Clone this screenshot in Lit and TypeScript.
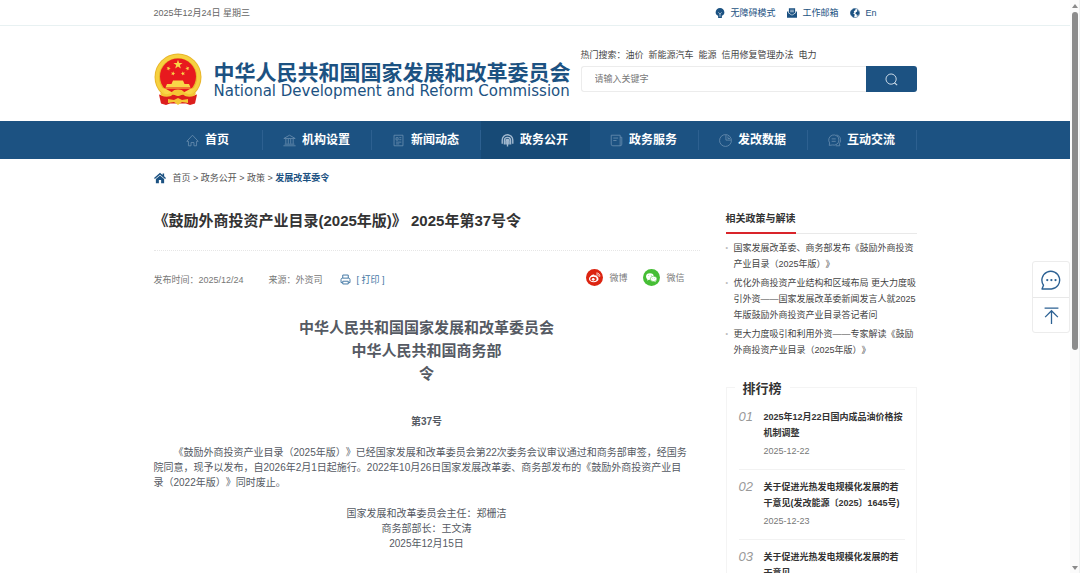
import { LitElement, html, svg, css } from "lit";
import { customElement, property } from "lit/decorators.js";
import { classMap } from "lit/directives/class-map.js";

const SANS = css`"Liberation Sans", "Noto Sans CJK SC", sans-serif`;

const icons: Record<string, unknown> = {
  bulb: svg`<path fill="currentColor" d="M8 0a7 7 0 0 0-7 7c0 2.500 1.500 4.200 4 5.500V16h6v-3.500c2.500-1.300 4-3 4-5.500a7 7 0 0 0-7-7z"/><path d="M5.500 7L8 9.500 10.500 7M8 9.500v4.500" stroke="#fff" stroke-width="1" fill="none"/>`,
  mail: svg`<path fill="currentColor" d="M0 6l2-1v3l6 4 6-4V5l2 1v9.500H0z"/><path fill="currentColor" d="M3 0.500h10v7L8 11 3 7.500z"/><path d="M5 3.500h6M5 6h6" stroke="#fff" stroke-width="1"/>`,
  globe: svg`<circle cx="8" cy="8" r="7.300" fill="#fff" stroke="currentColor" stroke-width=".9"/><path fill="currentColor" d="M1.500 4.500L5.500 1l3.500 0-.5 2.500L6 5l1 2-2 1.500 2.500 2-.5 3L5.500 15 1.500 11 .500 8zM11 2.500l3 2.500 1 3.500-1.500 3-2.500 1-.5-2.500-2-1 1-2.500 2-.5z"/>`,
  search: svg`<circle cx="7.500" cy="7.500" r="6.300" fill="none" stroke="currentColor" stroke-width="1.200"/><path d="M11.500 12l3.500 3" stroke="currentColor" stroke-width="1.300" fill="none"/>`,
  home: svg`<path d="M1 9L8 1.500 15 9h-2v5.500H9.800v-4H6.200v4H3V9z" fill="none" stroke="currentColor" stroke-linejoin="round"/>`,
  bank: svg`<path d="M1 5.500L8 1.500l7 4zM.500 14.500h15M2 12.500h12M3.500 6v6M6.500 6v6M9.500 6v6M12.500 6v6" fill="none" stroke="currentColor" stroke-linejoin="round"/>`,
  news: svg`<path d="M2.500 1.500h11v13h-11zM5 4.500h2.500v3H5zM9 4.500h2.500M9 7h2.500M5 10h6.500M5 12.200h4" fill="none" stroke="currentColor"/>`,
  open: svg`<path d="M1.500 12V7.500a6.500 6.500 0 0 1 13 0V12M4.200 13V8a3.800 3.800 0 0 1 7.600 0v5M8 6v9.500M6.200 13V8.500a1.800 1.800 0 0 1 3.600 0V13" fill="none" stroke="currentColor" stroke-width="1.700"/>`,
  service: svg`<path d="M1.500 1.500h11v13h-9a2 2 0 0 1-2-2zM12.500 4h2v8.500a2 2 0 0 1-2 2M4 5h6M4 8h4" fill="none" stroke="currentColor"/>`,
  data: svg`<circle cx="8" cy="8" r="7.300" fill="none" stroke="currentColor"/><path d="M8.500 1v6.500H15M11 3v2.500h2.500" fill="none" stroke="currentColor"/>`,
  chat: svg`<path d="M1.500 14l.500-3A6.300 6.300 0 1 1 5.500 13.500zM4.500 6h5M4.500 9h5M10.500 1.200A6.300 6.300 0 0 1 14 11.500l.500 3h-5" fill="none" stroke="currentColor"/>`,
  house: svg`<path fill="currentColor" d="M8 1L0 8l1.200 1.300L8 3.500l6.800 5.800L16 8l-2.500-2.200V2h-2v2z"/><path fill="currentColor" d="M8 4.500L2.500 9.200V15h4v-4.500h3V15h4V9.200z"/>`,
  print: svg`<path d="M4 6V1.500h8V6M3.500 12.500H1.500V8c0-1.200.800-2 2-2h9c1.200 0 2 .800 2 2v4.500h-2M4 10.500h8v4H4z" fill="none" stroke="currentColor" stroke-width="1.400" stroke-linejoin="round"/>`,
  weibo: svg`<circle cx="8" cy="8" r="8" fill="#dc2411"/><ellipse cx="7.300" cy="9.300" rx="4.500" ry="3.200" fill="#fff"/><path fill="#fff" d="M3.500 8c1-2 3-3.300 4-2.800.600.300.300 1 .300 1 2-.500 2.800 0 2.500 1z"/><ellipse cx="7" cy="9.500" rx="3" ry="2.100" fill="#dc2411"/><circle cx="6.800" cy="9.700" r="1.300" fill="#fff"/><path d="M10 3.800a2.600 2.600 0 0 1 3 3.200M10.200 5.300a1.100 1.100 0 0 1 1.300 1.400" fill="none" stroke="#fff" stroke-width=".8" stroke-linecap="round"/>`,
  wechat: svg`<circle cx="8" cy="8" r="8" fill="#46be35"/><ellipse cx="6.500" cy="7" rx="3.600" ry="3" fill="#fff"/><path fill="#fff" d="M4.200 8.800L4 11l2-1.400zM11.500 10.800l.600 1.700-2-1z"/><ellipse cx="10" cy="9.300" rx="3.100" ry="2.500" fill="#fff" stroke="#46be35" stroke-width=".5"/><circle cx="5.400" cy="6.200" r=".4" fill="#46be35"/><circle cx="7.700" cy="6.200" r=".4" fill="#46be35"/><circle cx="9.100" cy="8.700" r=".3" fill="#46be35"/><circle cx="11" cy="8.700" r=".3" fill="#46be35"/>`,
  bubble: svg`<path d="M.800 15.200L2 12.200A7.100 7.100 0 1 1 8.300 15.200z" fill="none" stroke="currentColor" stroke-width="1.100" stroke-linejoin="round"/><circle cx="5" cy="8" r=".9" fill="currentColor"/><circle cx="8.300" cy="8" r=".9" fill="currentColor"/><circle cx="11.600" cy="8" r=".9" fill="currentColor"/>`,
  top: svg`<path d="M1.500 1h13M8 16V3.800M2 9.500L8 3.500l6 6" fill="none" stroke="currentColor" stroke-width="1.200"/>`,
};

@customElement("ui-icon")
class UiIcon extends LitElement {
  @property() name = "home";
  static styles = css`
    :host { display: inline-flex; flex: none; width: 13px; height: 13px; }
    svg { display: block; width: 100%; height: 100%; }
  `;
  render() {
    return html`<svg viewBox="0 0 16 16" aria-hidden="true">${icons[this.name]}</svg>`;
  }
}

@customElement("national-emblem")
class NationalEmblem extends LitElement {
  static styles = css`
    :host { display: block; flex: none; width: 48px; height: 52px; }
    svg { display: block; width: 100%; height: 100%; }
  `;
  render() {
    const star = "M0-1L.235-.324.951-.309.380.124.588.809 0 .400-.588.809-.380.124-.951-.309-.235-.324z";
    const at = (x: number, y: number, s: number, r = 0) =>
      svg`<path d=${star} transform="translate(${x} ${y}) rotate(${r}) scale(${s})" fill="#f9d648"/>`;
    return html`<svg viewBox="0 0 48 52" role="img" aria-label="国徽">
      <circle cx="24" cy="24" r="23.500" fill="#e9b52b"/>
      <circle cx="24" cy="24" r="20.800" fill="none" stroke="#f6d13f" stroke-width="3.400"/>
      <circle cx="24" cy="23.500" r="18" fill="#e8191e"/>
      ${at(24, 11.500, 4.800)}${at(14.500, 15.500, 2.300, 20)}${at(33.500, 15.500, 2.300, -20)}${at(19, 20.500, 2.300, 10)}${at(29, 20.500, 2.300, -10)}
      <path fill="#f9d648" d="M19 27.500h10l1.500 3.500H35l1.500 3.500h-25L13 31h4.500zM7.500 35.500h33l-4 6h-25z"/>
      <path fill="#e8191e" d="M12 36h24l-6 3.200a6.500 3 0 0 0-12 0z"/>
      <path fill="#dc1f1d" d="M5 41.500c6 1.500 10 1.500 13-.5l6 2 6-2c3 2 7 2 13 .5L41 50.500 36 52l-4-1.500H16L12 52l-5-1.500z"/>
      <path fill="#f4c635" d="M6 39.500c5 2.500 9 2 12-.5a6.500 4 0 0 1 12 0c3 2.500 7 3 12 .5l-1 3c-5 2-9 1.500-12-1l-5 1.500-5-1.500c-3 2.500-7 3-12 1zM14 46l6 1 4-2 4 2 6-1v4l-6-1-4 3-4-3-6 1z"/>
    </svg>`;
  }
}

const NAV = [
  ["home", "首页"],
  ["bank", "机构设置"],
  ["news", "新闻动态"],
  ["open", "政务公开"],
  ["service", "政务服务"],
  ["data", "发改数据"],
  ["chat", "互动交流"],
];
const HOT = ["油价", "新能源汽车", "能源", "信用修复管理办法", "电力"];
const RELATED = [
  "国家发展改革委、商务部发布《鼓励外商投资产业目录（2025年版）》",
  "优化外商投资产业结构和区域布局 更大力度吸引外资——国家发展改革委新闻发言人就2025年版鼓励外商投资产业目录答记者问",
  "更大力度吸引和利用外资——专家解读《鼓励外商投资产业目录（2025年版）》",
];
const RANKING = [
  ["01", "2025年12月22日国内成品油价格按机制调整", "2025-12-22"],
  ["02", "关于促进光热发电规模化发展的若干意见(发改能源〔2025〕1645号)", "2025-12-23"],
  ["03", "关于促进光热发电规模化发展的若干意见", "2025-12-23"],
];

@customElement("app-root")
class AppRoot extends LitElement {
  static styles = css`
    :host { display: block; font: 9px/16px ${SANS}; text-spacing-trim: space-all; color: #666; background: #fff; }
    * { box-sizing: border-box; margin: 0; padding: 0; }
    a { color: inherit; text-decoration: none; }
    ul, ol { list-style: none; }
    .window { display: flex; height: 100vh; overflow: hidden; position: relative; }
    .page { flex: 1; min-width: 0; overflow: hidden; }
    .wrap { width: min(763px, 100% - 32px); margin: 0 auto; }

    .topbar { border-bottom: 1px solid #e8f1f2; }
    .topbar .wrap { display: flex; justify-content: space-between; align-items: center; height: 25px; }
    .tools { display: flex; gap: 12px; padding-right: 40px; color: #1c5282; }
    .tools a { display: flex; align-items: center; gap: 5px; }
    .tools ui-icon { width: 10px; height: 10px; }

    .header { display: flex; justify-content: space-between; padding: 21px 0 16px; }
    .brand { display: flex; gap: 12px; padding-top: 6px; color: #1c5282; }
    .names { padding-top: 9px; white-space: nowrap; }
    .name-zh { font-size: 21px; line-height: 22px; font-weight: 700; }
    .name-en { font: 15px/14px "DejaVu Sans", sans-serif; }
    .find { width: 336px; }
    .hot { display: flex; line-height: 16px; color: #444; margin-bottom: 3px; }
    .hot-list { display: flex; gap: 5px; }
    .search { display: flex; height: 26px; }
    .search input { flex: 1; min-width: 0; border: 1px solid #ececec; border-right: 0; border-radius: 3px 0 0 3px; padding: 0 13px; font: 9px ${SANS}; outline: 0; }
    .search input::placeholder { color: #777; opacity: 1; }
    .search button { width: 51px; border: 0; border-radius: 0 3px 3px 0; background: #1c5282; color: #cfdde9; display: grid; place-items: center; }

    .nav { background: #1c5282; }
    .nav ul { display: flex; }
    .nav li { flex: 1; display: flex; align-items: center; height: 38px; }
    .nav li.active { background: #174a76; }
    .nav a { flex: 1; display: flex; align-items: center; justify-content: center; gap: 6px; height: 20px; border-right: 1px solid #2d6090; color: #fff; font-size: 12px; font-weight: 700; }
    .nav .active a { border-color: transparent; }
    .nav ui-icon { color: #6a8fb0; }
    .nav .active ui-icon { color: #a3bad0; }

    .crumbs { display: flex; align-items: center; gap: 7px; height: 38px; color: #555; }
    .crumbs ui-icon { width: 12px; height: 12px; color: #1c5282; }
    .crumbs b { color: #1c5282; }

    .columns { display: grid; grid-template-columns: minmax(0, 1fr) 191px; gap: 26px; }
    .title { font-size: 15px; line-height: 24px; color: #333; padding: 12px 0 17px; border-bottom: 1px dotted #e6e6e6; }
    .meta { display: flex; align-items: center; height: 57px; color: #777; }
    .meta .source { margin-left: 25px; }
    .meta .print { display: flex; align-items: center; gap: 6px; margin-left: 17px; color: #3f76a3; background: none; border: 0; font: inherit; }
    .meta .print ui-icon { width: 11px; height: 11px; }
    .share { display: flex; gap: 16px; margin-left: auto; padding: 0 15px 4px 0; }
    .share a { display: flex; align-items: center; gap: 6px; }
    .share ui-icon { width: 17px; height: 17px; }
    .doc { padding-top: 8px; font-size: 10px; line-height: 15px; color: #555a63; text-align: center; }
    .doc h2 { font-size: 15px; line-height: 23px; }
    .doc h3 { font-size: 10px; line-height: 15px; margin: 29px 0 16px; }
    .doc .body { text-align: left; text-indent: 2em; margin-bottom: 16px; white-space: nowrap; }

    .side-head { border-bottom: 1px solid #e9e9e9; display: flex; margin-top: 8px; }
    .side-head h2 { font-size: 10px; line-height: 16px; color: #333; padding: 6px 0 5px; border-bottom: 2px solid #d9242a; margin-bottom: -1px; }
    .related { display: grid; gap: 3px; padding-top: 6px; color: #444; }
    .related li { display: flex; }
    .related li::before { content: "•"; width: 8px; flex: none; color: #bbb; font-size: 7px; }
    .rank { margin-top: 29px; border: 1px solid #f4f4f4; padding: 0 11px 0 12px; }
    .rank h2 { width: max-content; margin: -10px 0 9px -4px; padding: 0 8px; background: #fff; font-size: 13px; line-height: 22px; color: #333; }
    .rank li { display: grid; grid-template-columns: 25px 1fr; padding-bottom: 10px; margin-bottom: 9px; border-bottom: 1px solid #f2f2f2; }
    .rank i { font-size: 13px; line-height: 16px; color: #999; }
    .rank a { display: block; font-weight: 700; color: #333; line-height: 16px; }
    .rank time { display: block; margin-top: 2px; line-height: 16px; color: #777; }

    .float { position: absolute; right: 10px; top: 261px; width: 38px; border: 1px solid #ececec; border-radius: 3px; background: #fff; }
    .float button { display: grid; place-items: center; width: 100%; height: 35px; border: 0; background: none; color: #2c6193; }
    .float button + button { border-top: 1px solid #e8e8e8; }
    .float ui-icon { width: 20px; height: 20px; }
    .float button + button ui-icon { width: 17px; height: 17px; }

    .scroll { width: 10px; flex: none; display: flex; flex-direction: column; align-items: center; background: #fbfbfb; border-right: 1px solid #eef0f0; padding: 4px 0 3px; }
    .arrow { width: 0; border: 3px solid transparent; border-top: 0; border-bottom: 4px solid #8a8a8a; }
    .arrow.down { border-bottom: 0; border-top: 4px solid #8a8a8a; }
    .track { flex: 1; padding-top: 4px; }
    .thumb { width: 6px; height: 61%; border-radius: 3px; background: #8c8c8c; }
  `;

  render() {
    return html`<div class="window">
      <div class="page">
        <div class="topbar"><div class="wrap">
          <span>2025年12月24日 星期三</span>
          <div class="tools">
            <a href="#"><ui-icon name="bulb"></ui-icon>无障碍模式</a>
            <a href="#"><ui-icon name="mail"></ui-icon>工作邮箱</a>
            <a href="#"><ui-icon name="globe"></ui-icon>En</a>
          </div>
        </div></div>

        <header class="header wrap">
          <div class="brand">
            <national-emblem></national-emblem>
            <div class="names">
              <div class="name-zh">中华人民共和国国家发展和改革委员会</div>
              <div class="name-en">National Development and Reform Commission</div>
            </div>
          </div>
          <div class="find">
            <div class="hot"><div>热门搜索：</div><div class="hot-list">${HOT.map((t) => html`<a href="#">${t}</a>`)}</div></div>
            <form class="search">
              <input type="text" aria-label="搜索" placeholder="请输入关键字" />
              <button type="button" aria-label="搜索"><ui-icon name="search"></ui-icon></button>
            </form>
          </div>
        </header>

        <nav class="nav"><ul class="wrap">
          ${NAV.map(([icon, label], i) => html`<li class=${classMap({ active: i === 3 })}><a href="#"><ui-icon name=${icon}></ui-icon>${label}</a></li>`)}
        </ul></nav>

        <div class="crumbs wrap">
          <ui-icon name="house"></ui-icon>
          <div><a href="#">首页</a> &gt; <a href="#">政务公开</a> &gt; <a href="#">政策</a> &gt; <b>发展改革委令</b></div>
        </div>

        <div class="columns wrap">
          <article>
            <h1 class="title">《鼓励外商投资产业目录(2025年版)》 2025年第37号令</h1>
            <div class="meta">
              <span>发布时间：2025/12/24</span>
              <span class="source">来源：外资司</span>
              <button class="print" type="button"><ui-icon name="print"></ui-icon>[ 打印 ]</button>
              <div class="share">
                <a href="#"><ui-icon name="weibo"></ui-icon>微博</a>
                <a href="#"><ui-icon name="wechat"></ui-icon>微信</a>
              </div>
            </div>
            <div class="doc">
              <h2>中华人民共和国国家发展和改革委员会<br />中华人民共和国商务部<br />令</h2>
              <h3>第37号</h3>
              <p class="body">《鼓励外商投资产业目录（2025年版）》已经国家发展和改革委员会第22次委务会议审议通过和商务部审签，经国务<br />院同意，现予以发布，自2026年2月1日起施行。2022年10月26日国家发展改革委、商务部发布的《鼓励外商投资产业目<br />录（2022年版）》同时废止。</p>
              <p>国家发展和改革委员会主任：郑栅洁</p>
              <p>商务部部长：王文涛</p>
              <p>2025年12月15日</p>
            </div>
          </article>

          <aside>
            <div class="side-head"><h2>相关政策与解读</h2></div>
            <ul class="related">${RELATED.map((t) => html`<li><a href="#">${t}</a></li>`)}</ul>
            <section class="rank">
              <h2>排行榜</h2>
              <ol>${RANKING.map(([n, t, d]) => html`<li><i>${n}</i><div><a href="#">${t}</a><time>${d}</time></div></li>`)}</ol>
            </section>
          </aside>
        </div>
      </div>

      <div class="scroll" aria-hidden="true"><div class="arrow"></div><div class="track"><div class="thumb"></div></div><div class="arrow down"></div></div>
      <div class="float">
        <button type="button" aria-label="留言"><ui-icon name="bubble"></ui-icon></button>
        <button type="button" aria-label="返回顶部"><ui-icon name="top"></ui-icon></button>
      </div>
    </div>`;
  }
}
